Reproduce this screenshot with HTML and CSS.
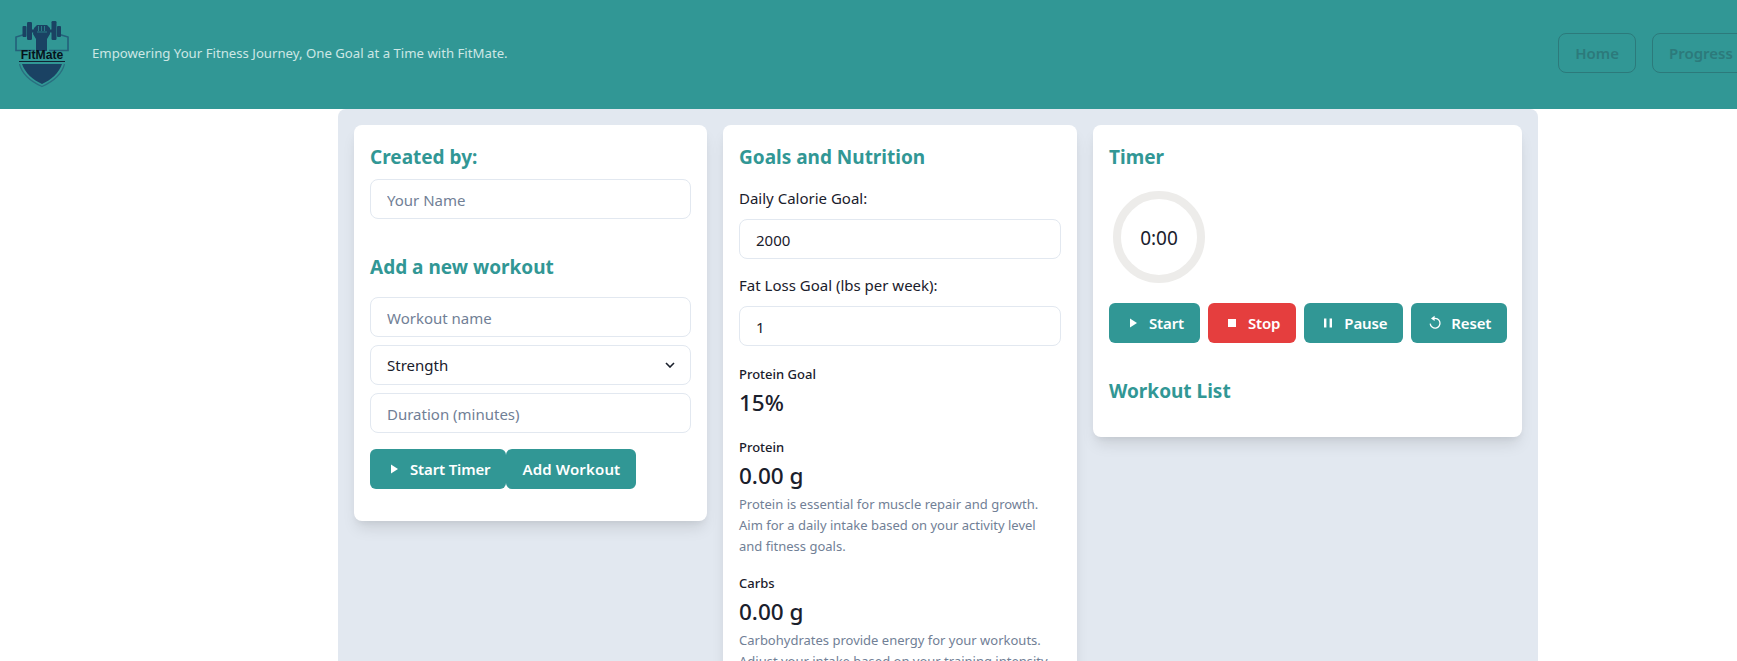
FILE: index.html
```html
<!DOCTYPE html>
<html lang="en">
<head>
<meta charset="utf-8">
<title>FitMate</title>
<link rel="stylesheet" href="styles.css">
</head>
<body>
<header class="topbar">
  <svg class="logo" viewBox="12 19 60 70" aria-label="FitMate logo">
    <path class="logo-line" d="M26 33 L16 36 V49.5 H35 M58 33 L68 36 V49.5 H49"/>
    <path class="logo-line-thin" d="M19 60.5 H65"/>
    <path class="logo-outline" d="M19.5 63 C22 73 32 81 42 85.5 C52 81 62 73 64.5 63"/>
    <path class="logo-fill" d="M22 63 H62 C59 72 51 79 42 83 C33 79 25 72 22 63 Z"/>
    <rect class="logo-fill" x="22.5" y="25" width="4" height="11" rx="1"/>
    <rect class="logo-fill" x="27" y="21" width="5" height="18" rx="1.2"/>
    <rect class="logo-fill" x="51.5" y="20" width="5" height="19" rx="1.2"/>
    <rect class="logo-fill" x="57" y="25" width="4" height="11" rx="1"/>
    <rect class="logo-fill" x="30" y="28.5" width="24" height="3"/>
    <path class="logo-fill" d="M34 27 L37 24 L47 24 L50 27 L50 33 L47 38 L47 50 H36 V38 L33 33 Z"/>
    <path class="logo-knuckle" d="M38.5 25 V30 M41.5 25 V30 M44.5 25 V30 M37 31 H47"/>
    <text class="logo-text" x="42" y="58" text-anchor="middle">FitMate</text>
  </svg>
  <p class="tagline">Empowering Your Fitness Journey, One Goal at a Time with FitMate.</p>
  <nav class="nav">
    <a class="nav-link">Home</a>
    <a class="nav-link">Progress</a>
  </nav>
</header>

<main class="panel">
  <section class="card">
    <h2 class="title title-created">Created by:</h2>
    <input class="field" type="text" placeholder="Your Name">
    <h2 class="title title-add">Add a new workout</h2>
    <div class="stack">
      <input class="field" type="text" placeholder="Workout name">
      <div class="select-wrap">
        <select class="field select">
          <option>Strength</option>
        </select>
        <svg class="chevron" viewBox="0 0 10 6"><path d="M1 1 L5 5 L9 1"/></svg>
      </div>
      <input class="field" type="text" placeholder="Duration (minutes)">
    </div>
    <div class="btn-row-tight">
      <button class="btn btn-teal">
        <svg class="icon" viewBox="0 0 16 16"><path d="M5 3.5 L12 8 L5 12.5 Z"/></svg>
        <span>Start Timer</span>
      </button>
      <button class="btn btn-teal btn-add"><span>Add Workout</span></button>
    </div>
  </section>

  <section class="card card-nutrition">
    <h2 class="title title-goals">Goals and Nutrition</h2>
    <label class="label">Daily Calorie Goal:</label>
    <input class="field" type="text" value="2000">
    <label class="label label-next">Fat Loss Goal (lbs per week):</label>
    <input class="field" type="text" value="1">
    <div class="stat stat-goal">
      <div class="stat-label">Protein Goal</div>
      <div class="stat-value">15%</div>
    </div>
    <div class="stat">
      <div class="stat-label">Protein</div>
      <div class="stat-value">0.00 g</div>
      <p class="stat-desc">Protein is essential for muscle repair and growth. Aim for a daily intake based on your activity level and fitness goals.</p>
    </div>
    <div class="stat">
      <div class="stat-label">Carbs</div>
      <div class="stat-value">0.00 g</div>
      <p class="stat-desc">Carbohydrates provide energy for your workouts. Adjust your intake based on your training intensity.</p>
    </div>
  </section>

  <section class="card">
    <h2 class="title title-timer">Timer</h2>
    <div class="ring"><span>0:00</span></div>
    <div class="btn-row">
      <button class="btn btn-teal">
        <svg class="icon" viewBox="0 0 16 16"><path d="M5 3.5 L12 8 L5 12.5 Z"/></svg>
        <span>Start</span>
      </button>
      <button class="btn btn-red">
        <svg class="icon" viewBox="0 0 16 16"><rect x="4" y="4" width="8" height="8"/></svg>
        <span>Stop</span>
      </button>
      <button class="btn btn-teal">
        <svg class="icon" viewBox="0 0 16 16"><rect x="4" y="3.5" width="2.4" height="9"/><rect x="9.6" y="3.5" width="2.4" height="9"/></svg>
        <span>Pause</span>
      </button>
      <button class="btn btn-teal">
        <svg class="icon icon-stroke" viewBox="0 0 16 16"><path d="M6.4 3.6 A4.9 4.9 0 1 1 3.2 8.6"/><path class="icon-tip" d="M7.6 0.8 L7.6 6 L4 3.4 Z"/></svg>
        <span>Reset</span>
      </button>
    </div>
    <h2 class="title title-list">Workout List</h2>
  </section>
</main>
</body>
</html>
```
FILE: styles.css
```css
* { box-sizing: border-box; }

html, body {
  margin: 0;
  height: 100vh;
  overflow: hidden;
  background: #fff;
  font-family: "Noto Sans", "Open Sans", sans-serif;
  color: #1a202c;
}

.topbar {
  display: flex;
  align-items: center;
  height: 109px;
  padding-left: 12px;
  background: #319795;
  overflow: hidden;
}

.logo { width: 60px; height: 70px; flex: none; margin-right: 20px; }
.logo-line { fill: none; stroke: #24607a; stroke-width: 1.6; }
.logo-line-thin { fill: none; stroke: #123; stroke-width: 1; }
.logo-outline { fill: none; stroke: #2a6f80; stroke-width: 1.2; }
.logo-fill { fill: #1a4263; }
.logo-knuckle { fill: none; stroke: #319795; stroke-width: .7; }
.logo-text { font-family: "Liberation Sans", sans-serif; font-size: 12.2px; font-weight: 700; fill: #06131c; }

.tagline {
  margin: 0 0 3px;
  font-size: 13.2px;
  color: #cde7e5;
  white-space: nowrap;
}

.nav {
  display: flex;
  gap: 16px;
  flex: none;
  margin: -3px -24px 0 auto;
}

.nav-link {
  display: block;
  padding: 0 16px;
  height: 40px;
  line-height: 38px;
  border: 1px solid #2c7a7b;
  border-radius: 8px;
  font-size: 15px;
  font-weight: 600;
  color: #2c7a7b;
}

.nav-link + .nav-link { width: 109px; }

.panel {
  display: grid;
  grid-template-columns: 353px 354px 429px;
  gap: 16px;
  align-items: start;
  width: 1200px;
  height: 600px;
  margin-left: 338px;
  padding: 16px;
  background: #e2e8f0;
  border-radius: 8px 8px 0 0;
}

.card {
  padding: 18px 16px 32px;
  background: #fff;
  border-radius: 8px;
  box-shadow: 0 10px 15px -3px rgba(0, 0, 0, .1), 0 4px 6px -2px rgba(0, 0, 0, .05);
}

.title {
  margin: 0;
  font-size: 19px;
  line-height: 28px;
  font-weight: 700;
  color: #319795;
}

.title-created { margin-bottom: 8px; }
.title-add { margin: 34px 0 16px; }
.title-goals { margin-bottom: 15px; }
.title-timer { margin-bottom: 20px; }
.title-list { margin-top: 34px; }

.field {
  display: block;
  width: 100%;
  height: 40px;
  padding: 1px 16px 0;
  border: 1px solid #e2e8f0;
  border-radius: 8px;
  background: #fff;
  font: inherit;
  font-size: 15px;
  color: #1a202c;
  outline: none;
}

.field::placeholder { color: #718096; opacity: 1; }

.stack { display: flex; flex-direction: column; gap: 8px; }

.select-wrap { position: relative; }
.select { appearance: none; -webkit-appearance: none; padding-top: 0; }
.chevron {
  position: absolute;
  right: 16px;
  top: 17px;
  width: 10px;
  height: 6px;
  fill: none;
  stroke: #1a202c;
  stroke-width: 1.6;
  pointer-events: none;
}

.btn-row-tight { display: flex; margin-top: 16px; }
.btn-row { display: flex; gap: 8px; }

.btn {
  display: inline-flex;
  align-items: center;
  gap: 8px;
  height: 40px;
  padding: 0 16px;
  border: 0;
  border-radius: 6px;
  font: inherit;
  font-size: 15px;
  font-weight: 600;
  letter-spacing: -.15px;
  color: #fff;
}

.btn-add { letter-spacing: .15px; }
.btn-teal { background: #319795; }
.btn-red { background: #e53e3e; }

.icon { width: 16px; height: 16px; fill: #fff; flex: none; }
.icon-stroke { fill: none; stroke: #fff; stroke-width: 1.3; }
.icon-tip { fill: #fff; stroke: none; }

.label {
  display: block;
  font-size: 15px;
  line-height: 24px;
  margin-bottom: 9px;
}

.label-next { margin-top: 14px; }

.stat { margin-bottom: 16px; }
.stat-goal { margin-top: 18px; margin-bottom: 18px; }

.stat-label {
  font-size: 13px;
  line-height: 20px;
  font-weight: 500;
}

.stat-value {
  margin-top: 3px;
  font-size: 22.5px;
  line-height: 32px;
  font-weight: 500;
}

.stat-desc {
  margin: 2px 0 0;
  font-size: 13px;
  line-height: 21px;
  color: #718096;
}

.ring {
  display: flex;
  align-items: center;
  justify-content: center;
  width: 92px;
  height: 92px;
  margin: 0 0 20px 4px;
  padding-top: 1px;
  border: 8px solid #edecea;
  border-radius: 50%;
  font-size: 19px;
}
```
